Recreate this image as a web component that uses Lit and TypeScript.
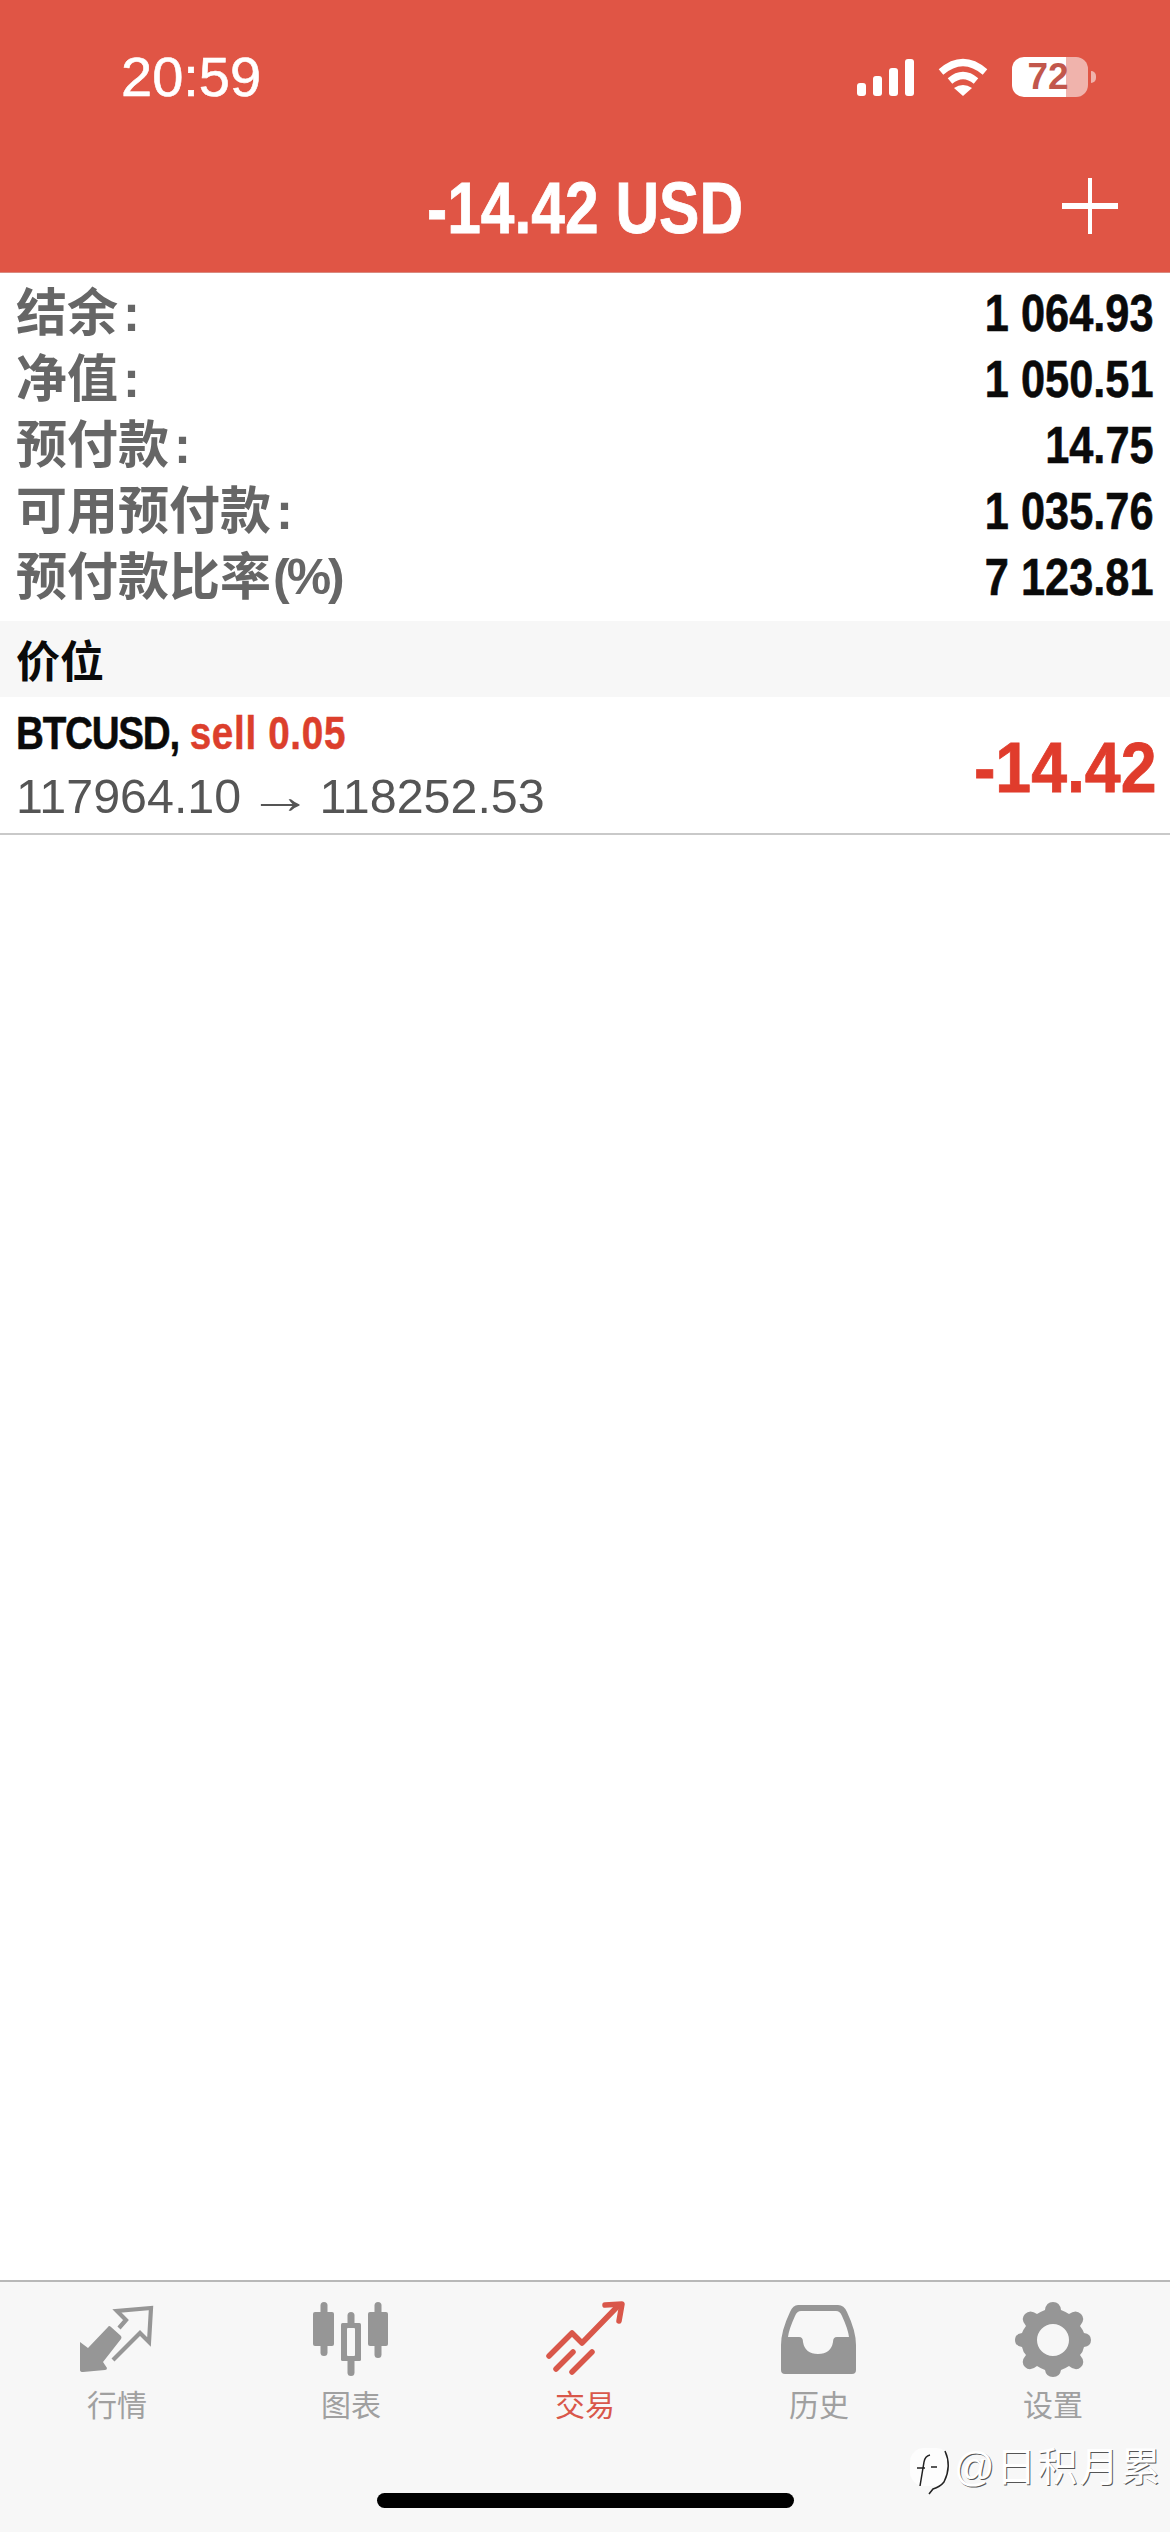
import { LitElement, html, css, svg } from "lit";
import { customElement } from "lit/decorators.js";

const summary = [
  ["结余", ":", "1 064.93"],
  ["净值", ":", "1 050.51"],
  ["预付款", ":", "14.75"],
  ["可用预付款", ":", "1 035.76"],
  ["预付款比率", "(%)", "7 123.81"],
];

// icons use a 90x90 box so each sits on the same grid in the tab bar
const icons = {
  quotes: svg`
    <path d="M8 43 L16 49 L36 28 Q37 26 39 28 L49 37 Q50 39 49 40 L31 63 L35 69 Q35 71 33 71 L11 73 Q8 73 8 71Z" fill="currentColor"/>
    <path d="M47 29 L54 21 L45 12 L79 9 L77 43 L68 34 L41 61" fill="none" stroke="currentColor" stroke-width="4.2"/>`,
  chart: svg`
    <g fill="currentColor">
      <rect x="14.5" y="3" width="7" height="54" rx="3.5"/>
      <rect x="7" y="13" width="21" height="34" rx="2"/>
      <rect x="68.5" y="3" width="7" height="56" rx="3.5"/>
      <rect x="62" y="13" width="20" height="34" rx="2"/>
      <rect x="41.5" y="13" width="7" height="64" rx="3.5"/>
      <rect x="35" y="24" width="20" height="38" rx="1.5"/>
    </g>
    <rect x="41" y="29" width="8" height="28" rx="1" fill="#f7f7f7"/>`,
  trade: svg`
    <g fill="none" stroke="currentColor" stroke-width="5.5" stroke-linecap="round" stroke-linejoin="round">
      <path d="M9 57 L32 34 L42 44 L77 8"/>
      <path d="M65 6 L82 5 L79 22"/>
      <path d="M16 70 L33 53"/>
      <path d="M32 73 L52 53"/>
    </g>`,
  history: svg`
    <path fill-rule="evenodd" fill="currentColor" d="M24 6 H64 Q70 6 73 13 Q82 32 82 46 V71 Q82 75 78 75 H11 Q7 75 7 71 V46 Q7 32 16 13 Q19 6 24 6Z M27 12 Q23 12 21 17 Q15 30 14 38 H25 Q29 38 29 43 Q31 55 44 55 Q57 55 59 43 Q59 38 63 38 H75 Q74 30 68 17 Q66 12 62 12Z"/>`,
  settings: svg`
    <path transform="translate(0 -4)" fill-rule="evenodd" fill="currentColor" d="M45 7 Q52 7 53 15 Q58 17 61 19 Q68 14 73 19 Q78 24 72 31 Q75 35 76 38 Q83 39 83 45 Q83 51 76 52 Q75 57 72 60 Q78 67 73 72 Q68 77 61 71 Q58 73 53 75 Q52 82 45 82 Q38 82 37 75 Q32 73 29 71 Q22 77 17 72 Q12 67 18 60 Q15 57 14 52 Q7 51 7 45 Q7 39 14 38 Q15 35 18 31 Q12 24 17 19 Q22 14 29 19 Q32 17 37 15 Q38 7 45 7Z M45 29 A16 16 0 1 0 45 61 A16 16 0 1 0 45 29Z"/>`,
};

const tabs: [string, keyof typeof icons, boolean][] = [
  ["行情", "quotes", false],
  ["图表", "chart", false],
  ["交易", "trade", true],
  ["历史", "history", false],
  ["设置", "settings", false],
];

@customElement("app-root")
export class AppRoot extends LitElement {
  static override styles = css`
    :host {
      display: block;
      width: 1170px;
      height: 2532px;
      background: #fff;
      font-family: "Liberation Sans", "Noto Sans CJK SC", sans-serif;
      overflow: hidden;
    }

    .page {
      position: relative;
      display: flex;
      flex-direction: column;
      height: 2532px;
    }

    .squeeze {
      display: inline-block;
      white-space: pre;
      transform-origin: right center;
    }

    .head {
      height: 273px;
      flex: none;
      background: #e05545;
      color: #fff;
      box-sizing: border-box;
      border-bottom: 1px solid #d98a80;
      display: flex;
      flex-direction: column;
    }

    .status {
      height: 154px;
      display: flex;
      align-items: center;
      justify-content: space-between;
      padding: 0 82px 0 121px;
    }

    .time {
      font-size: 56px;
      line-height: 1;
      -webkit-text-stroke: 0.6px #fff;
    }

    .status-icons {
      display: flex;
      align-items: center;
      gap: 24px;
    }

    .battery {
      position: relative;
      width: 76px;
      height: 40px;
      border-radius: 12px;
      background: linear-gradient(to right, #fff 54px, #f0b3ac 54px);
      color: #c2574c;
      font-size: 37px;
      font-weight: 700;
      line-height: 40px;
      text-align: center;
      box-sizing: border-box;
      padding-right: 4px;
    }

    .battery::after {
      content: "";
      position: absolute;
      left: 79px;
      top: 14px;
      width: 5px;
      height: 12px;
      border-radius: 0 6px 6px 0;
      background: #f0b3ac;
    }

    .nav {
      display: flex;
      align-items: center;
      justify-content: center;
      height: 108px;
      position: relative;
    }

    .title {
      font-size: 72px;
      font-weight: 700;
      line-height: 1;
      transform: scaleX(0.84);
      transform-origin: center;
      -webkit-text-stroke: 0.8px #fff;
    }

    .plus {
      position: absolute;
      right: 52px;
      top: 24px;
    }

    .summary {
      display: flex;
      flex-direction: column;
      padding: 7px 16px 11px 16px;
    }

    .summary-row {
      height: 66px;
      display: flex;
      align-items: center;
      justify-content: space-between;
    }

    .label {
      font-size: 51px;
      font-weight: 700;
      color: #666;
      line-height: 1;
      display: flex;
      align-items: center;
    }

    .colon {
      margin-left: 5px;
    }

    .pct {
      font-size: 50px;
      letter-spacing: -3px;
      margin-left: 2px;
    }

    .value {
      font-size: 51px;
      font-weight: 700;
      color: #0a0a0a;
      line-height: 1;
      transform: scaleX(0.85);
      -webkit-text-stroke: 0.6px #0a0a0a;
    }

    .section {
      height: 76px;
      flex: none;
      background: #f7f7f7;
      display: flex;
      align-items: center;
      padding-left: 16px;
      font-size: 44px;
      font-weight: 700;
      color: #0a0a0a;
    }

    .position {
      height: 138px;
      flex: none;
      box-sizing: border-box;
      border-bottom: 2px solid #c9c9c9;
      display: flex;
      align-items: center;
      justify-content: space-between;
      padding: 0 14px 0 16px;
    }

    .pos-main {
      display: flex;
      flex-direction: column;
      gap: 9px;
    }

    .pos-title {
      font-size: 46px;
      font-weight: 700;
      line-height: 52px;
      color: #0a0a0a;
      transform: scaleX(0.84);
      transform-origin: left center;
      -webkit-text-stroke: 0.5px currentColor;
    }

    .symbol {
      letter-spacing: -1.5px;
    }

    .sell {
      color: #dc3f2c;
      letter-spacing: 0.8px;
    }

    .prices {
      display: flex;
      gap: 15px;
      font-size: 48.4px;
      line-height: 56px;
      color: #555;
      white-space: pre;
    }

    .arrow {
      display: inline-block;
      transform: scaleX(1.35);
    }

    .profit {
      font-size: 70px;
      font-weight: 700;
      line-height: 1;
      color: #e03c2c;
      transform: scaleX(0.92);
      margin-top: 6px;
      -webkit-text-stroke: 0.8px #e03c2c;
    }

    .spacer {
      flex: 1;
    }

    .tabbar {
      height: 252px;
      flex: none;
      box-sizing: border-box;
      background: #f7f7f7;
      border-top: 2px solid #b8b8b8;
      display: grid;
      grid-template-columns: repeat(5, 1fr);
      align-items: start;
      padding-top: 17px;
    }

    .tab {
      display: flex;
      flex-direction: column;
      align-items: center;
      color: #969696;
      font-size: 30px;
      line-height: 34px;
    }

    .tab span {
      color: #a0a0a0;
    }

    .tab.active,
    .tab.active span {
      color: #d9574a;
    }

    .home {
      position: absolute;
      left: 377px;
      top: 2493px;
      width: 417px;
      height: 15px;
      border-radius: 8px;
      background: #000;
    }

    .watermark {
      position: absolute;
      left: 910px;
      top: 2445px;
      display: flex;
      align-items: flex-start;
      gap: 0;
      font-size: 40px;
      line-height: 44px;
      letter-spacing: 1.5px;
      color: #fff;
      text-shadow: 1px 1px 0 #555;
      white-space: nowrap;
    }

    .watermark svg {
      margin-top: 3px;
    }
  `;

  private _signal() {
    return html`<svg width="57" height="37" viewBox="0 0 57 37" fill="#fff">
      <rect x="0" y="24" width="9" height="13" rx="3"/>
      <rect x="16" y="17" width="9" height="20" rx="3"/>
      <rect x="32" y="9" width="9" height="28" rx="3"/>
      <rect x="48" y="0" width="9" height="37" rx="3"/>
    </svg>`;
  }

  private _wifi() {
    return html`<svg width="50" height="38" viewBox="0 0 50 38" fill="none" stroke="#fff" stroke-width="7">
      <path d="M3 14 Q25 -5 47 14"/>
      <path d="M12 23 Q25 12 38 23"/>
      <path d="M16 30 L25 38 L34 30 Q25 24 16 30Z" fill="#fff" stroke="none"/>
    </svg>`;
  }

  override render() {
    return html`
      <div class="page">
        <header class="head">
          <div class="status">
            <div class="time">20:59</div>
            <div class="status-icons">
              ${this._signal()}${this._wifi()}
              <div class="battery">72</div>
            </div>
          </div>
          <div class="nav">
            <div class="title squeeze">-14.42 USD</div>
            <svg class="plus" width="56" height="56" viewBox="0 0 56 56" fill="#fff">
              <rect x="26" y="0" width="4" height="56"/>
              <rect x="0" y="25" width="56" height="6"/>
            </svg>
          </div>
        </header>

        <section class="summary">
          ${summary.map(
            ([label, tail, value]) => html`
              <div class="summary-row">
                <span class="label">${label}<span class=${tail === ":" ? "colon" : "pct"}>${tail}</span></span>
                <span class="value squeeze">${value}</span>
              </div>
            `
          )}
        </section>

        <div class="section">价位</div>

        <div class="position">
          <div class="pos-main">
            <div class="pos-title squeeze"><span class="symbol">BTCUSD,</span> <span class="sell">sell 0.05</span></div>
            <div class="prices"><span>117964.10</span><span class="arrow">→</span><span>118252.53</span></div>
          </div>
          <div class="profit squeeze">-14.42</div>
        </div>

        <div class="spacer"></div>

        <nav class="tabbar">
          ${tabs.map(
            ([label, icon, active]) => html`
              <div class="tab ${active ? "active" : ""}">
                <svg width="90" height="90" viewBox="0 0 90 90">${icons[icon]}</svg>
                <span>${label}</span>
              </div>
            `
          )}
        </nav>

        <div class="home"></div>
        <div class="watermark">
          <svg width="44" height="48" viewBox="0 0 44 48" fill="none">
            <rect x="0" y="0" width="40" height="38" rx="14" fill="#fdfdfd"/>
            <path d="M20 7 Q15 8 14 14 L10 38 M7 20 H15 M21 19 H27 M35 3 Q42 18 34 34 Q30 39 23 41 L19 46" stroke="#222" stroke-width="1.5"/>
          </svg>
          <span>@日积月累</span>
        </div>
      </div>
    `;
  }
}

declare global {
  interface HTMLElementTagNameMap {
    "app-root": AppRoot;
  }
}
